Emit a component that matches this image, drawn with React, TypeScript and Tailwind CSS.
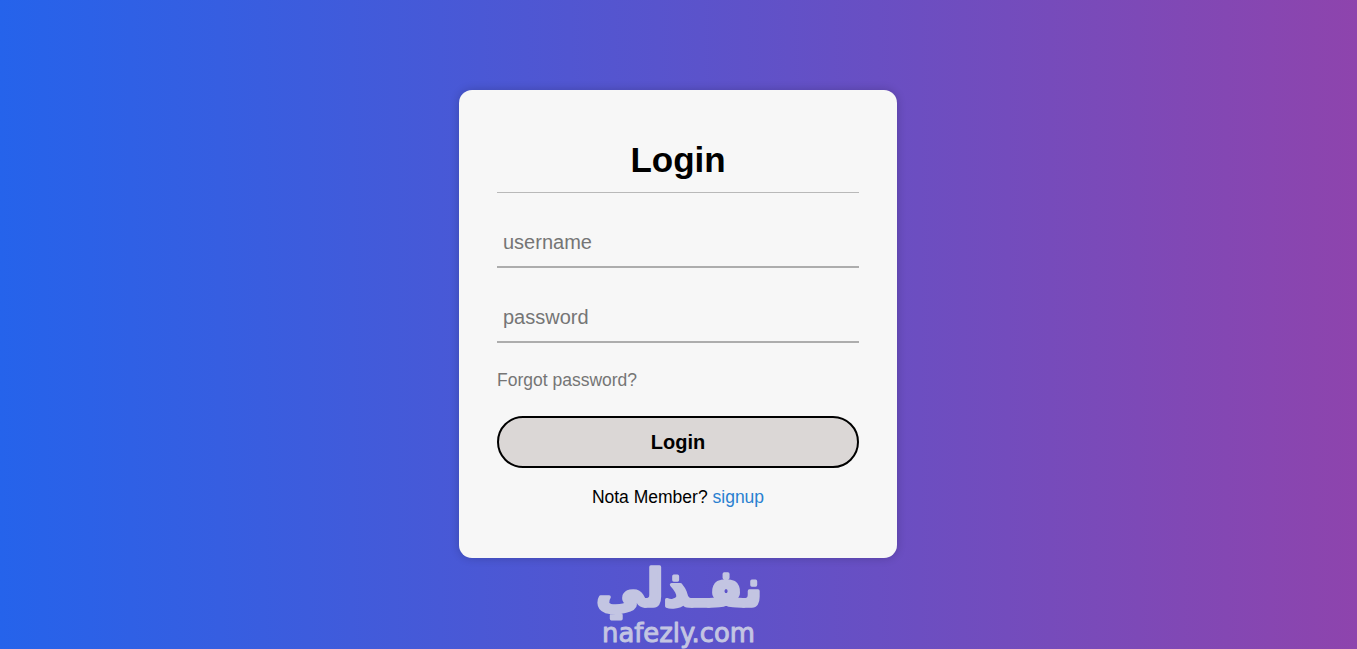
interface FieldProps {
  name: string;
  type: string;
}

function Field({ name, type }: FieldProps) {
  return (
    <input
      name={name}
      type={type}
      placeholder={name}
      className="block h-[50px] w-full border-b-2 border-[#adadad] bg-transparent px-1.5 text-xl text-black outline-none placeholder:text-[#757575]"
    />
  );
}

function Wordmark() {
  return (
    <svg
      viewBox="0 0 170 91"
      className="h-[91px] w-[170px] overflow-visible fill-[#c3c5e2] stroke-[#c3c5e2]"
      role="img"
      aria-label="نفذلي nafezly.com"
    >
      <text
        x="3"
        y="48"
        direction="ltr"
        textLength="166"
        lengthAdjust="spacingAndGlyphs"
        strokeWidth="3.5"
        strokeLinejoin="round"
        className="font-['DejaVu_Sans',sans-serif] text-[51px] font-bold"
      >
        نفـذلي
      </text>
      <text
        x="9"
        y="84"
        textLength="153"
        lengthAdjust="spacingAndGlyphs"
        strokeWidth="1"
        strokeLinejoin="round"
        className="font-['DejaVu_Sans',sans-serif] text-[27px]"
      >
        nafezly.com
      </text>
    </svg>
  );
}

export default function App() {
  return (
    <div className="flex h-screen flex-col items-center overflow-hidden bg-[linear-gradient(to_right,#2563eb,#8e44ad)] pr-px pt-[90px] font-['Liberation_Sans',Arial,sans-serif]">
      <main className="h-[468px] w-[438px] shrink-0 rounded-[13px] bg-[#f7f7f7] px-[38px] pt-[50px] shadow-[0_0_10px_rgba(0,0,0,0.2)]">
        <h1 className="h-[53px] border-b border-[#b9b9b9] text-center text-[35px] leading-10 font-bold text-black">
          Login
        </h1>
        <form onSubmit={(e) => e.preventDefault()}>
          <div className="flex flex-col gap-[25px] pt-[25px]">
            <Field name="username" type="text" />
            <Field name="password" type="password" />
          </div>
          <a href="#" className="mt-[25px] block text-[17.5px] leading-6 text-[#757575]">
            Forgot password?
          </a>
          <button
            type="submit"
            className="mt-6 block h-[52px] w-full rounded-full border-2 border-black bg-[#dbd7d6] text-xl font-bold text-black"
          >
            Login
          </button>
          <p className="mt-[17px] text-center text-[17.5px] leading-6 text-black">
            Nota Member?{" "}
            <a href="#" className="text-[#2980d0]">
              signup
            </a>
          </p>
        </form>
      </main>
      <Wordmark />
    </div>
  );
}
